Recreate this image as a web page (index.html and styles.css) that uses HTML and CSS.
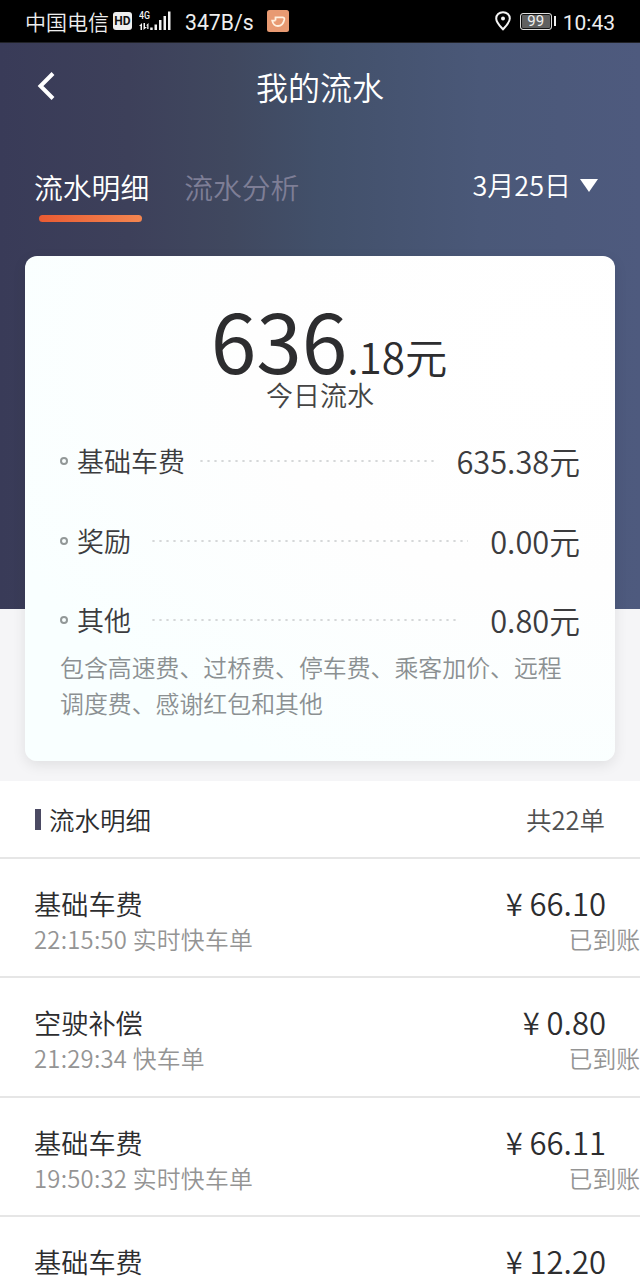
FILE: index.html
```html
<!DOCTYPE html>
<html lang="zh-CN">
<head>
<meta charset="utf-8">
<title>我的流水</title>
<link rel="stylesheet" href="styles.css">
</head>
<body>
<div class="phone">
  <header class="status">
    <span class="carrier">中国电信</span>
    <span class="hd">HD</span>
    <span class="signal">
      <svg width="32" height="22" viewBox="0 0 32 22" fill="#f2f2f2"><text x="0" y="9" class="gen" textLength="11" lengthAdjust="spacingAndGlyphs">4G</text><path d="M0 16 L3 13 V20 H1.500 V16Z M4.500 13 H6 V17 H8 L4.500 20Z M7 15.500 L9.500 13 V19 H8.200 V15.500Z"/><rect x="11.2" y="17.5" width="2.5" height="2.5"/><rect x="15.5" y="14.5" width="2.5" height="5.500"/><rect x="20" y="10" width="2.500" height="10"/><rect x="24.5" y="6" width="2.500" height="14"/><rect x="29" y="1.500" width="2.500" height="18.500"/></svg>
    </span>
    <span class="speed">347B/s</span>
    <svg class="app" width="22" height="22" viewBox="0 0 22 22"><rect width="22" height="22" rx="2.5" fill="#e89a72"/><path d="M8.500 10.500 V7.300 H15.500 Q17.800 7.300 17.300 9.800 Q15.800 16 11 16 Q6.300 16 5.200 10.600 H8.500" fill="none" stroke="#fff0df" stroke-width="1.800"/></svg>
    <span class="right">
      <svg class="pin" width="16" height="20" viewBox="0 0 16 20"><path d="M8 1.200 C4 1.200 1.200 4 1.200 7.500 C1.200 11.500 4.500 14.500 8 18.300 C11.500 14.500 14.800 11.500 14.800 7.500 C14.800 4 12 1.200 8 1.200Z" fill="none" stroke="#f4f4f4" stroke-width="2"/><circle cx="8" cy="7.600" r="2" fill="#f4f4f4"/></svg>
      <span class="battery">99</span>
      <span class="clock">10:43</span>
    </span>
  </header>

  <section class="hero">
    <nav class="bar">
      <svg class="back" width="18" height="28" viewBox="0 0 18 28"><path d="M16 1.500 L3.500 14 L16 26.500" fill="none" stroke="#fff" stroke-width="4"/></svg>
      <h1 class="title">我的流水</h1>
    </nav>
    <div class="tabs">
      <span class="tab active">流水明细</span>
      <span class="tab">流水分析</span>
      <span class="date">3月25日<i class="caret"></i></span>
    </div>
    <div class="card">
      <div class="total"><span class="int">636</span><span class="dec">.18元</span></div>
      <div class="caption">今日流水</div>
      <div class="item"><i class="ring"></i><span>基础车费</span><i class="dots"></i><b class="amount">635.38元</b></div>
      <div class="item"><i class="ring"></i><span>奖励</span><i class="dots wide"></i><b class="amount">0.00元</b></div>
      <div class="item"><i class="ring"></i><span>其他</span><i class="dots other"></i><b class="amount">0.80元</b></div>
      <p class="note">包含高速费、过桥费、停车费、乘客加价、远程调度费、感谢红包和其他</p>
    </div>
  </section>

  <section class="list">
    <div class="head"><i class="mark"></i><span>流水明细</span><span class="count">共22单</span></div>
    <div class="row">
      <div class="line"><span>基础车费</span><span class="price">¥ 66.10</span></div>
      <div class="sub"><span class="when">22:15:50 实时快车单</span><span class="state">已到账</span></div>
    </div>
    <div class="row">
      <div class="line"><span>空驶补偿</span><span class="price">¥ 0.80</span></div>
      <div class="sub"><span class="when">21:29:34 快车单</span><span class="state">已到账</span></div>
    </div>
    <div class="row">
      <div class="line"><span>基础车费</span><span class="price">¥ 66.11</span></div>
      <div class="sub"><span class="when">19:50:32 实时快车单</span><span class="state">已到账</span></div>
    </div>
    <div class="row">
      <div class="line"><span>基础车费</span><span class="price">¥ 12.20</span></div>
    </div>
  </section>
</div>
</body>
</html>
```
FILE: styles.css
```css
* { box-sizing: border-box; }
body { margin: 0; background: #fff; }
.phone {
  width: 640px; height: 1280px; overflow: hidden;
  font-family: "Noto Sans CJK SC", sans-serif; font-weight: 350;
  color: #2d2d2f; background: #fff;
}

/* status bar */
.status {
  height: 43px; padding: 0 25px; display: flex; align-items: center;
  background: #000; color: #eee; border-bottom: 1px solid #202126;
}
.carrier { font-size: 21px; line-height: 42px; }
.hd {
  width: 19px; height: 18px; margin-left: 4px; border-radius: 3px;
  background: #eee; color: #111; text-align: center;
  font: 700 12px/19px Roboto, sans-serif;
}
.signal { width: 32px; height: 22px; margin-left: 7px; }
.gen { font: 500 11px Roboto, sans-serif; }
.speed { width: 68px; margin-left: 14px; padding-top: 3px; font: 400 21.2px/42px Roboto, sans-serif; }
.app { margin-left: 14px; }
.right { margin-left: auto; display: flex; align-items: center; }
.battery {
  position: relative; width: 32px; height: 17px; margin: 0 11px 0 9px;
  border: 1.5px solid #ddd; border-radius: 3px; background: #606060;
  box-shadow: inset 0 0 0 1px #111;
  font: 400 15px/15px Roboto, sans-serif; text-align: center;
}
.battery::after {
  content: ""; position: absolute; right: -5px; top: 2px;
  width: 2px; height: 10px; background: #eee;
}
.clock { padding-top: 3px; font: 400 21px/42px Roboto, sans-serif; }

/* header area */
.hero {
  height: 738px; padding: 0 25px;
  background:
    linear-gradient(90deg, #393b58 0, #3d405a 20%, #40485f 36%, #42506a 50%, #4a5878 75%, #4e5a7e 100%) 0 0 / 100% 566px no-repeat,
    #f5f5f7;
}
.bar { height: 87px; padding: 0 12px 2px; display: grid; grid-template-columns: 40px 1fr 40px; align-items: center; }
.title { margin: 0; text-align: center; font-weight: 350; font-size: 32px; line-height: 48px; color: #fff; }
.tabs { height: 126px; padding: 34px 17px 0 9px; display: flex; align-items: flex-start; gap: 35px; }
.tab { font-size: 28.8px; line-height: 46px; color: #7e7e96; }
.active { color: #fff; }
.active::after {
  content: ""; display: block; width: 103px; height: 7px; margin: 5px 0 0 5px;
  border-radius: 4px; background: linear-gradient(90deg, #e95b33, #f48650);
}
.date { margin-left: auto; display: flex; align-items: center; gap: 9px; font-size: 27px; line-height: 42px; color: #fff; }
.caret { border: 9px solid transparent; border-top: 13px solid #fff; border-bottom: 0; }

.card {
  width: 590px; height: 505px; padding: 39px 35px 0; border-radius: 12px;
  background: radial-gradient(ellipse at 90% 20%, #fff 0, #fefefe 40%, #f9ffff 80%);
  box-shadow: 0 4px 14px rgba(0, 0, 0, .09);
}
.total { height: 88px; line-height: 88px; text-align: center; white-space: nowrap; padding-left: 18px; }
.int { font-size: 82px; font-weight: 400; }
.dec { font-size: 42.3px; font-weight: 350; }
.caption { height: 24px; line-height: 23px; text-align: center; font-size: 27px; color: #444; }
.item {
  height: 79.5px; padding-top: 29px; display: flex; align-items: center;
  font-size: 27px; line-height: 48px; color: #3c3c3e;
}
.ring { width: 8px; height: 8px; margin-right: 9px; border: 2px solid #929898; border-radius: 50%; }
.dots {
  flex: 1; height: 2px; margin: 0 22px 0 13px;
  background: radial-gradient(circle, #d5d7d8 0 1px, transparent 1.3px) 0 0 / 7px 2px;
}
.wide, .other { margin-left: 19px; }
.other { margin-right: 33px; }
.amount { font-size: 30.8px; font-weight: 350; }
.note { margin: 3px 0 0; font-size: 23.9px; line-height: 36px; color: #8b9092; width: 510px; }

/* records */
.head {
  height: 77.5px; padding: 1px 35px 0; display: flex; align-items: center;
  border-bottom: 2px solid #e6e6e6; font-size: 25.500px; line-height: 40px;
}
.mark { width: 6px; height: 21px; margin-right: 8px; background: #4b4a63; }
.count { margin-left: auto; color: #505050; }
.row { height: 119.500px; padding: 24px 34px 0; border-bottom: 2px solid #e6e6e6; }
.line { height: 40px; display: flex; justify-content: space-between; align-items: center; font-size: 27.200px; line-height: 40px; }
.price { font-size: 31px; }
.sub { display: flex; justify-content: space-between; margin-right: -34px; font-size: 23.800px; line-height: 32px; color: #949494; }
.when { letter-spacing: .25px; }
```
